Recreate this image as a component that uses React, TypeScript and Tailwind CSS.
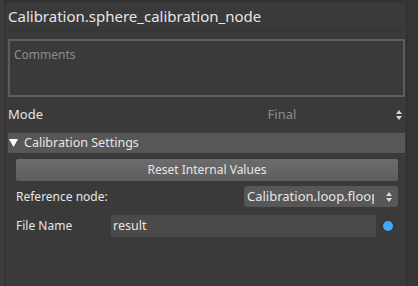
const font = { fontFamily: '"Noto Sans", "Open Sans", sans-serif' };

function UpDown() {
  return (
    <svg width="6" height="10" viewBox="0 0 6 10" className="fill-[#d8d8d8]">
      <path d="M3 0 L6 4 H0 Z" />
      <path d="M0 6 H6 L3 10 Z" />
    </svg>
  );
}

export default function App() {
  return (
    <div
      className="w-[418px] h-[286px] bg-[#3a3a3a] text-[#e6e6e6] flex overflow-hidden"
      style={font}
    >
      <div className="w-[5px] border-r border-[#2e2e2e] bg-[#3d3d3d]" />
      <div className="flex-1 flex flex-col">
        <div className="h-[3px] bg-[#333]" />
        <div className="h-[28px] flex items-center pl-[3px] text-[15px] border-b border-[#333]">
          Calibration.sphere_calibration_node
        </div>
        <div className="ml-[3px] mr-[1px] mt-[8px] h-[58px] border-2 border-[#5c5c5c] px-[4px] pt-[5px] text-[12px] text-[#8c8c8c]">
          Comments
        </div>
        <div className="h-[36px] flex items-center pl-[3px] pr-[4px] text-[13px]">
          <span className="w-[100px]">Mode</span>
          <span className="flex-1 text-center text-[#8c8c8c] pl-[60px]">Final</span>
          <UpDown />
        </div>
        <div className="ml-[3px] mr-[1px] h-[20px] bg-[#575757] flex items-center text-[12.5px]">
          <svg width="9" height="8" viewBox="0 0 9 8" className="fill-white ml-[1px] mr-[6px]">
            <path d="M0 0 H9 L4.5 8 Z" />
          </svg>
          Calibration Settings
        </div>
        <div className="pl-[11px] pr-[8px] pt-[6px] flex flex-col">
          <div className="h-[22px] rounded-[2px] bg-gradient-to-b from-[#6c6c6c] to-[#5e5e5e] flex items-center justify-center text-[12px]">
            Reset Internal Values
          </div>
          <div className="h-[29px] flex items-center text-[12px] mt-[1px]">
            <span className="flex-1">Reference node:</span>
            <div className="w-[154px] h-[21px] rounded-[3px] bg-[#575757] flex items-center pl-[3px] pr-[6px] text-[13px]">
              <span className="w-[127px] overflow-hidden whitespace-nowrap">Calibration.loop.floop</span>
              <span className="flex-1" />
              <UpDown />
            </div>
          </div>
          <div className="h-[30px] flex items-center text-[12px]">
            <span className="w-[95px]">File Name</span>
            <div className="w-[265px] h-[22px] bg-[#4a4a4a] flex items-center pl-[2px] text-[12.5px]">result</div>
            <div className="ml-[7px] w-[10px] h-[10px] rounded-full bg-[#3fa9f5]" />
          </div>
        </div>
      </div>
      <div className="w-[12px] border-l border-[#2e2e2e] bg-[#363636]" />
    </div>
  );
}
